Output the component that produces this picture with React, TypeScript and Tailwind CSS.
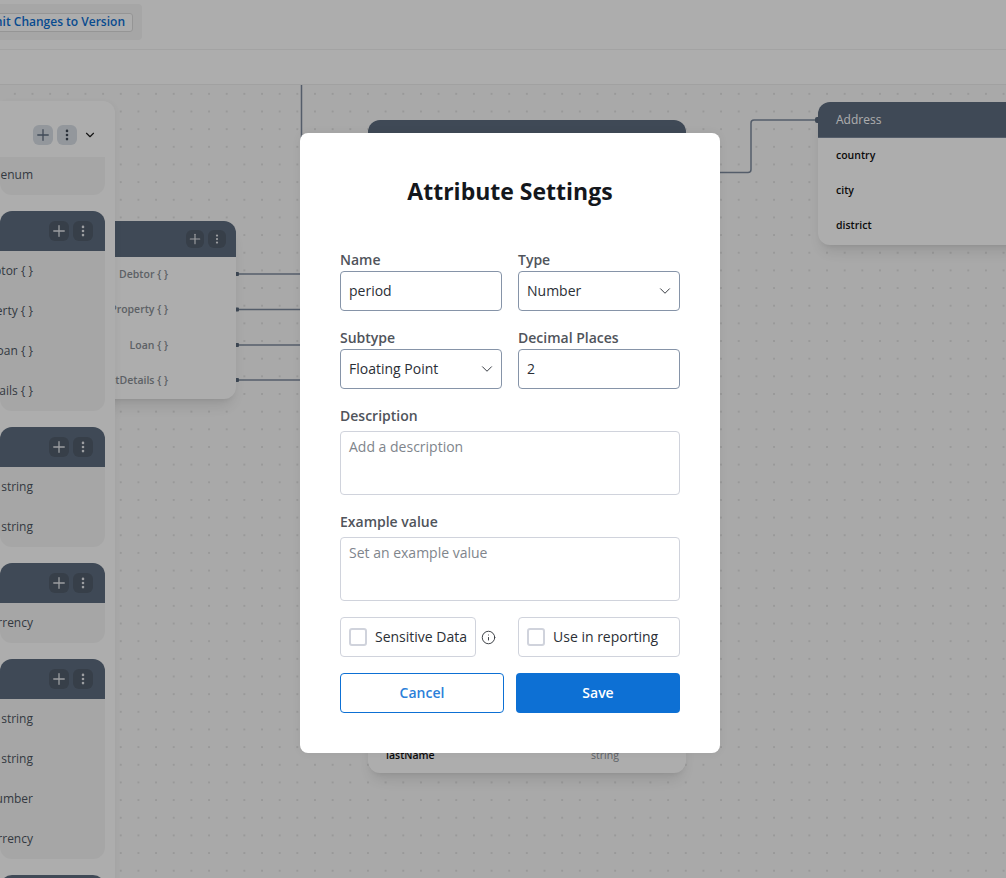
import { ChevronDown, Plus, MoreVertical, Info } from "lucide-react";

const font = { fontFamily: '"Open Sans", "Noto Sans", sans-serif' };

type SideCard = { rows: string[]; };

const sideCards: SideCard[] = [
  { rows: ["Debtor { }", "Property { }", "Loan { }", "PaymentDetails { }"] },
  { rows: ["string", "string"] },
  { rows: ["currency"] },
  { rows: ["string", "string", "number", "currency"] },
];

function HeaderButtons() {
  return (
    <div className="flex gap-1">
      <div className="flex h-5 w-5 items-center justify-center rounded-md bg-[#525d6c] text-[#e6e9ed]">
        <Plus size={18} strokeWidth={1.75} />
      </div>
      <div className="flex h-5 w-5 items-center justify-center rounded-md bg-[#525d6c] text-[#e6e9ed]">
        <MoreVertical size={14} strokeWidth={2.5} />
      </div>
    </div>
  );
}

function Sidebar() {
  return (
    <div className="absolute left-0 top-[16px] flex w-[115px] flex-col gap-4 rounded-tr-xl bg-white pr-[10px] shadow-[2px_0_6px_rgba(0,0,0,0.04)]">
      <div>
        <div className="flex h-[56px] items-center justify-end gap-[6px] pt-[12px]">
          <div className="flex gap-1">
            <div className="flex h-5 w-5 items-center justify-center rounded-md bg-[#d9dfe6] text-[#5f6d81]">
              <Plus size={18} strokeWidth={1.75} />
            </div>
            <div className="flex h-5 w-5 items-center justify-center rounded-md bg-[#d9dfe6] text-[#3f4956]">
              <MoreVertical size={14} strokeWidth={2.5} />
            </div>
          </div>
          <ChevronDown size={14} className="mr-2 text-[#222]" />
        </div>
        <div className="flex h-[38px] items-center justify-end rounded-b-xl bg-[#f5f5f5] pb-[2px] pr-[72px] text-xs text-[#4d5561]">
          enum
        </div>
      </div>
      {sideCards.map((card, i) => (
        <div key={i} className="overflow-hidden rounded-xl bg-[#f5f5f5]">
          <div className="flex h-10 items-center justify-end bg-[#5d6c7f] pr-3">
            <HeaderButtons />
          </div>
          {card.rows.map((row, j) => (
            <div key={j} className="flex h-10 items-center justify-end overflow-hidden whitespace-nowrap pr-[72px] text-xs text-[#4d5561]">
              {row}
            </div>
          ))}
        </div>
      ))}
      <div className="h-10 rounded-t-xl bg-[#5d6c7f]" />
    </div>
  );
}

function Connectors() {
  return (
    <svg className="absolute left-0 top-0 h-[793px] w-[1006px]" viewBox="0 0 1006 793" fill="none">
      <g stroke="#7c8a9d" strokeWidth="1.5">
        <path d="M301.5 0V60" />
        <path d="M237 189H370" />
        <path d="M237 224.500H370" />
        <path d="M237 260H370" />
        <path d="M237 295H370" />
        <path d="M700 87.500H748a3 3 0 0 0 3-3V38a3 3 0 0 1 3-3H818" />
      </g>
      <g fill="#5d6c7f">
        <rect x="235" y="187" width="4" height="4" rx="1" />
        <rect x="235" y="222.500" width="4" height="4" rx="1" />
        <rect x="235" y="258" width="4" height="4" rx="1" />
        <rect x="235" y="293" width="4" height="4" rx="1" />
        <rect x="815" y="32" width="5" height="6" rx="2" />
      </g>
    </svg>
  );
}

function Canvas() {
  return (
    <div className="relative h-[793px] overflow-hidden bg-[#fafafa] bg-[radial-gradient(#e2e2e2_1px,transparent_1.2px)] bg-[size:17.67px_17.67px] bg-[position:6px_0px]">
      <Connectors />

      {/* middle node, clipped by the sidebar */}
      <div className="absolute left-[90px] top-[136px] w-[146px] overflow-hidden rounded-xl bg-white shadow-lg">
        <div className="flex h-[36px] items-center justify-end bg-[#5d6c7f] pr-[10px]">
          <div className="flex gap-[4px]">
            <div className="flex h-[18px] w-[18px] items-center justify-center rounded-md bg-[#525d6c] text-[#e6e9ed]">
              <Plus size={16} strokeWidth={1.75} />
            </div>
            <div className="flex h-[18px] w-[18px] items-center justify-center rounded-md bg-[#525d6c] text-[#e6e9ed]">
              <MoreVertical size={12} strokeWidth={2.5} />
            </div>
          </div>
        </div>
        {["Debtor { }", "Property { }", "Loan { }", "PaymentDetails { }"].map((row) => (
          <div key={row} className="flex h-[35.500px] items-center justify-end whitespace-nowrap pr-[68px] text-[10.500px] font-semibold text-[#8a8f96]">
            {row}
          </div>
        ))}
      </div>

      <Sidebar />

      {/* node behind the modal */}
      <div className="absolute left-[368px] top-[35px] h-[653px] w-[318px] overflow-hidden rounded-xl bg-white shadow-lg">
        <div className="h-[36px] bg-[#5d6c7f]" />
        <div className="absolute bottom-[9px] left-[18px] text-[10.500px] font-semibold text-[#111]">lastName</div>
        <div className="absolute bottom-[9px] left-[223px] text-[10.500px] text-[#8a8f96]">string</div>
      </div>

      {/* address node */}
      <div className="absolute left-[818px] top-[17px] w-[210px] overflow-hidden rounded-xl bg-white pb-[2px] shadow-lg">
        <div className="flex h-[36px] items-center border-b border-[#7c8a9d] bg-[#5d6c7f] pl-[18px] text-xs font-medium text-[#ffffff]">
          Address
        </div>
        {["country", "city", "district"].map((row) => (
          <div key={row} className="flex h-[35px] items-center pl-[18px] text-[10.500px] font-semibold text-[#111]">
            {row}
          </div>
        ))}
      </div>
    </div>
  );
}

function Label({ children }: { children: string }) {
  return <label className="mb-px block h-5 text-sm font-semibold leading-5 text-[#50545b]">{children}</label>;
}

function SelectField({ value }: { value: string }) {
  return (
    <div className="flex h-10 items-center justify-between rounded-[4px] border border-[#8694a8] pl-2 pr-[5px] text-sm text-[#2b2f36]">
      <span>{value}</span>
      <ChevronDown size={18} strokeWidth={1.25} />
    </div>
  );
}

function TextField({ value }: { value: string }) {
  return (
    <input
      readOnly
      value={value}
      className="block h-10 w-full rounded-[4px] border border-[#8694a8] px-2 pb-[2px] text-sm text-[#2b2f36] outline-none"
    />
  );
}

function Checkbox({ label, className }: { label: string; className: string }) {
  return (
    <div className={`flex h-10 items-center gap-2 rounded-[4px] border border-[#d0d3dc] pl-2 text-sm text-[#2b2f36] ${className}`}>
      <span className="h-[18px] w-[18px] rounded-[3px] border-2 border-[#d0d3dc]" />
      <span>{label}</span>
    </div>
  );
}

function Modal() {
  return (
    <div className="absolute left-[300px] top-[133px] w-[420px] rounded-lg bg-white px-10 pb-10 pt-[42px] shadow-[0_0_10px_rgba(0,0,0,0.06)]">
      <h1 className="mb-[43px] text-center text-[23px] font-bold leading-8 text-[#14171c]">Attribute Settings</h1>
      <div className="grid grid-cols-2 gap-x-4 gap-y-[17px]">
        <div>
          <Label>Name</Label>
          <TextField value="period" />
        </div>
        <div>
          <Label>Type</Label>
          <SelectField value="Number" />
        </div>
        <div>
          <Label>Subtype</Label>
          <SelectField value="Floating Point" />
        </div>
        <div>
          <Label>Decimal Places</Label>
          <TextField value="2" />
        </div>
      </div>
      <div className="mt-[17px]">
        <label className="mb-[5px] block h-5 text-sm font-semibold leading-5 text-[#50545b]">Description</label>
        <textarea
          readOnly
          placeholder="Add a description"
          className="block h-16 w-full resize-none rounded-[4px] border border-[#d0d3dc] px-2 py-[5px] text-sm leading-5 outline-none placeholder:text-[#80858c]"
        />
      </div>
      <div className="mt-[17px]">
        <label className="mb-[5px] block h-5 text-sm font-semibold leading-5 text-[#50545b]">Example value</label>
        <textarea
          readOnly
          placeholder="Set an example value"
          className="block h-16 w-full resize-none rounded-[4px] border border-[#d0d3dc] px-2 py-[5px] text-sm leading-5 outline-none placeholder:text-[#80858c]"
        />
      </div>
      <div className="mt-4 grid grid-cols-2 gap-x-4">
        <div className="flex items-center">
          <Checkbox label="Sensitive Data" className="w-[136px]" />
          <Info size={15} strokeWidth={1.5} className="ml-[5px] text-[#33373d]" />
        </div>
        <Checkbox label="Use in reporting" className="w-full" />
      </div>
      <div className="mt-4 grid grid-cols-2 gap-x-3">
        <button className="h-10 rounded-[4px] border border-[#0d70d4] bg-white text-sm font-semibold text-[#2b7fd9]">Cancel</button>
        <button className="h-10 rounded-[4px] bg-[#0d70d4] text-sm font-semibold text-white">Save</button>
      </div>
    </div>
  );
}

export default function App() {
  return (
    <div className="relative h-[878px] overflow-hidden bg-white" style={font}>
      <div className="flex h-[50px] items-start border-b border-[#f0f0f0]">
        <div className="ml-[-60px] mt-1 flex h-[36px] w-[202px] items-center justify-end rounded bg-[#f5f5f5] pr-[9px]">
          <div className="flex h-[19px] items-center whitespace-nowrap rounded-[3px] border border-[#dcdcdc] bg-white pl-[6px] pr-[7px] text-xs font-semibold text-[#0d70d4]">
            Commit Changes to Version
          </div>
        </div>
      </div>
      <div className="h-[35px] border-b border-[#eeeeee]" />
      <Canvas />
      <div className="absolute inset-0 bg-black/[.32]" />
      <Modal />
    </div>
  );
}
